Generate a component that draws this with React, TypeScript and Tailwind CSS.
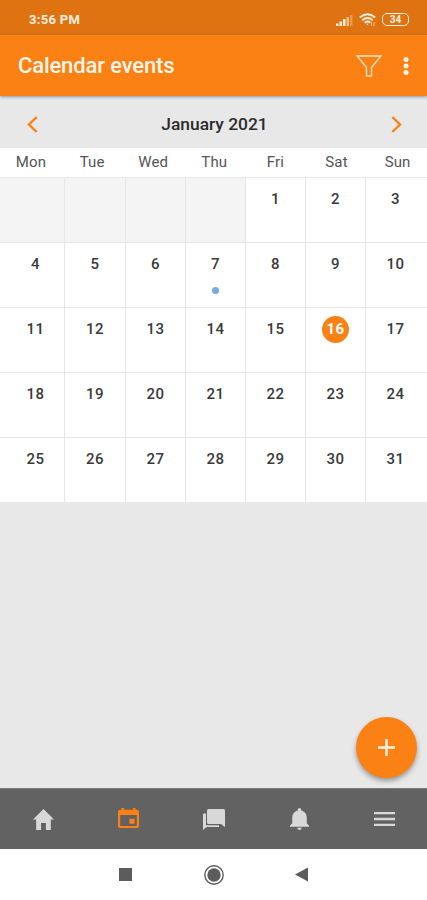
import React from 'react';

const WEEKDAYS = ['Mon', 'Tue', 'Wed', 'Thu', 'Fri', 'Sat', 'Sun'];
const CELLS: (number | null)[] = [null, null, null, null, ...Array.from({ length: 31 }, (_, i) => i + 1)];

function StatusBar() {
  return (
    <div className="flex h-[35px] items-center justify-between bg-[#df7312] pl-[29px] pr-[18px] pt-1 text-[#fff0e0]">
      <span className="text-[13px] leading-4 font-bold tracking-[0.3px]">3:56 PM</span>
      <div className="flex items-center">
        <svg className="mr-[6px] h-3 w-[17px]" viewBox="0 0 17 12" fill="currentColor">
          <path d="M0 9.5h2.5V12H0zM3.5 7.5H6V12H3.5zM7 5h2.5v7H7z" />
          <path d="M10.5 3H13v9h-2.5z" opacity=".6" />
          <path d="M14 1h2.5v11H14z" opacity=".3" />
        </svg>
        <svg className="mr-[6px] h-[14px] w-[17px]" viewBox="0 0 17 14" fill="none" stroke="currentColor" strokeWidth="1.9">
          <path d="M.8 4.5Q8.5-1.8 16.2 4.5M3.3 7.2q5.2-4.3 10.4 0M5.7 9.8q2.8-2.4 5.6 0" />
          <circle cx="8.5" cy="11.3" r=".8" fill="currentColor" stroke="none" />
          <path d="M12.5 9v4M15 9v4" strokeWidth="1" opacity=".6" />
        </svg>
        <div className="flex h-[13px] w-[27px] items-center justify-center rounded-[5px] border-[1.5px] border-current text-[10px] leading-none font-bold">34</div>
      </div>
    </div>
  );
}

function AppBar() {
  return (
    <header className="relative z-10 flex h-[61px] items-center bg-[#fb8114] pl-[18px] pr-[18px] text-[#fff5e9] shadow-[0_1px_3px_rgba(50,70,100,0.5)]">
      <h1 className="flex-1 text-[22px] leading-7 font-medium tracking-[-0.13px]">Calendar events</h1>
      <svg className="mr-[21px] h-[22px] w-[26px]" viewBox="0 0 26 22" fill="none" stroke="#ffe2bd" strokeWidth="1.4">
        <path d="M1.2 1h23.6l-9.3 11.5v8.5h-5v-8.5z" />
      </svg>
      <svg className="h-5 w-[6px]" viewBox="0 0 6 20" fill="currentColor">
        <circle cx="3" cy="3.5" r="2.5" /><circle cx="3" cy="10" r="2.5" /><circle cx="3" cy="16.5" r="2.5" />
      </svg>
    </header>
  );
}

function Chevron({ flip = false }: { flip?: boolean }) {
  return (
    <svg className={flip ? 'mt-1 h-[17px] w-[11px] -scale-x-100' : 'mt-1 h-[17px] w-[11px]'} viewBox="0 0 11 17" fill="none" stroke="#fb8114" strokeWidth="2.4">
      <path d="M9.7 1L2 8.5 9.7 16" />
    </svg>
  );
}

function Calendar() {
  return (
    <section>
      <div className="flex h-[52px] items-center justify-between bg-[#e8e8e8] pl-[27px] pr-[25px]">
        <Chevron />
        <h2 className="mt-1 text-[17.4px] leading-6 font-medium text-[#2b2b2b]">January 2021</h2>
        <Chevron flip />
      </div>
      <div className="grid h-[29px] grid-cols-[repeat(7,61.1px)] items-center bg-white pb-px pl-[0.5px] text-center text-[15px] leading-5 tracking-[0.15px] text-[#555555]">
        {WEEKDAYS.map((d) => <span key={d}>{d}</span>)}
      </div>
      <div className="grid auto-rows-[65px] grid-cols-[65px_61px_60px_60px_60px_60px_61px] bg-white">
        {CELLS.map((day, i) => {
          const first = i % 7 === 0;
          const last = i % 7 === 6;
          return (
            <div
              key={i}
              className={`flex flex-col items-center border-t border-[#e6e6e6] pt-[8px] ${last ? 'pr-[2px]' : 'border-r'} ${first ? 'pl-[7px]' : ''} ${day === null ? 'bg-[#f4f4f4]' : ''}`}
            >
              {day !== null && (
                <span className={`flex size-[27px] items-center justify-center rounded-full text-[15px] leading-none tracking-[0.4px] ${day === 16 ? 'bg-[#fb8114] font-bold text-white' : 'font-medium text-[#3a3a3a]'}`}>
                  {day}
                </span>
              )}
              {day === 7 && <span className="mt-[9px] size-[7px] rounded-full bg-[#78a9e2]" />}
            </div>
          );
        })}
      </div>
    </section>
  );
}

function NavBar() {
  return (
    <nav className="grid h-[61px] grid-cols-5 items-center justify-items-center border-t border-[#7c7c7c] bg-[#626262] pl-px text-[#d8d8d8]">
      <svg className="mt-px h-[21px] w-[21px]" viewBox="48 64 416 384" preserveAspectRatio="none" fill="currentColor">
        <path d="M208 448V320h96v128h97.6V256H464L256 64 48 256h62.4v192z" />
      </svg>
      <svg className="-mt-[3px] h-5 w-[21px] text-[#fb8114]" viewBox="64 64 384 384" preserveAspectRatio="none" fill="currentColor">
        <path d="M368 272h-96v96h96v-96zM336 64v32H176V64h-48v32h-24c-22 0-40 18-40 40v272c0 22 18 40 40 40h304c22 0 40-18 40-40V136c0-22-18-40-40-40h-24V64h-48zm72 344H104V196h304v212z" />
      </svg>
      <svg className="h-[21px] w-[22px]" viewBox="0 0 22 21" fill="currentColor">
        <path d="M5.5 0h15Q22 0 22 1.5V18l-4-3H5.5Q4 15 4 13.5v-12Q4 0 5.5 0z" />
        <path d="M0 5.5Q0 4.5 1 4.5h2V16.2H16V18H3.5L0 21z" />
      </svg>
      <svg className="h-[22px] w-[19px]" viewBox="80 48 352 416" preserveAspectRatio="none" fill="currentColor">
        <path d="M256 464c22.8 0 41.4-18.7 41.4-41.6h-82.8c0 22.9 18.6 41.6 41.4 41.6zm134.6-124.8V224.8c0-63.4-44.5-117.5-103.5-131V79.2c0-17.7-13.5-31.2-31.1-31.2s-31.1 13.5-31.1 31.2v14.6c-59 13.5-103.5 67.6-103.5 131v114.4L80 380.8v20.8h352v-20.8l-41.4-41.6z" />
      </svg>
      <svg className="ml-px h-[14px] w-[21px]" viewBox="64 128 384 256" preserveAspectRatio="none" fill="currentColor">
        <path d="M64 384h384v-42.7H64V384zm0-106.7h384v-42.6H64v42.6zM64 128v42.7h384V128H64z" />
      </svg>
    </nav>
  );
}

function SystemBar() {
  return (
    <div className="flex h-[51px] items-center justify-center gap-[72px] bg-white pr-px text-[#5c5c5c]">
      <span className="size-[13px] bg-current" />
      <svg className="size-5" viewBox="0 0 20 20" fill="none" stroke="currentColor" strokeWidth="1.4">
        <circle cx="10" cy="10" r="9.2" />
        <circle cx="10" cy="10" r="6.7" fill="currentColor" stroke="none" />
      </svg>
      <svg className="-ml-px h-[15px] w-[13px]" viewBox="0 0 13 15" fill="currentColor"><path d="M0 7.5L13 .5v14z" /></svg>
    </div>
  );
}

export default function App() {
  return (
    <div className="flex h-[900px] w-[427px] flex-col overflow-hidden bg-[#e8e8e8] font-['Roboto',sans-serif]">
      <StatusBar />
      <AppBar />
      <main className="relative flex-1">
        <Calendar />
        <button aria-label="Add event" className="absolute right-[10px] bottom-[10px] flex size-[61px] items-center justify-center rounded-full bg-[#fb8114] shadow-[0_3px_5px_rgba(0,0,0,0.35)]">
          <svg className="size-[17px]" viewBox="0 0 17 17" stroke="#fff5e6" strokeWidth="2.4"><path d="M8.5 0v17M0 8.5h17" /></svg>
        </button>
      </main>
      <NavBar />
      <SystemBar />
    </div>
  );
}
